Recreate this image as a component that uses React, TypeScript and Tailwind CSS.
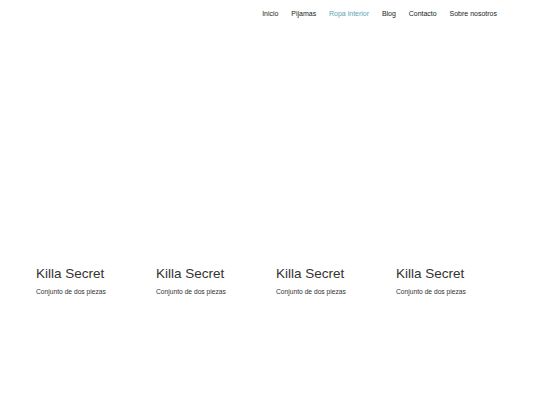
import React from 'react';

const navItems = ['Inicio', 'Pijamas', 'Ropa interior', 'Blog', 'Contacto', 'Sobre nosotros'];

const products = [
  { name: 'Killa Secret', desc: 'Conjunto de dos piezas' },
  { name: 'Killa Secret', desc: 'Conjunto de dos piezas' },
  { name: 'Killa Secret', desc: 'Conjunto de dos piezas' },
  { name: 'Killa Secret', desc: 'Conjunto de dos piezas' },
];

export default function App() {
  return (
    <div
      className="w-[540px] h-[405px] bg-white overflow-hidden"
      style={{ fontFamily: '"Liberation Sans", Arial, sans-serif' }}
    >
      <header className="flex justify-end pr-[43px] pt-[9px]">
        <nav className="flex gap-[12.8px] text-[7px] leading-[10px]">
          {navItems.map((item) => (
            <a
              key={item}
              href="#"
              className={item === 'Ropa interior' ? 'text-[#5aa5b5]' : 'text-[#222]'}
            >
              {item}
            </a>
          ))}
        </nav>
      </header>

      <section className="grid grid-cols-4 pl-[36px] pr-[24px] pt-[247px]">
        {products.map((p, i) => (
          <div key={i} className="flex flex-col">
            <h3 className="text-[13.5px] leading-[16px] text-[#333]">{p.name}</h3>
            <p className="mt-[5px] text-[6.7px] leading-[9px] text-[#333]">{p.desc}</p>
          </div>
        ))}
      </section>
    </div>
  );
}
